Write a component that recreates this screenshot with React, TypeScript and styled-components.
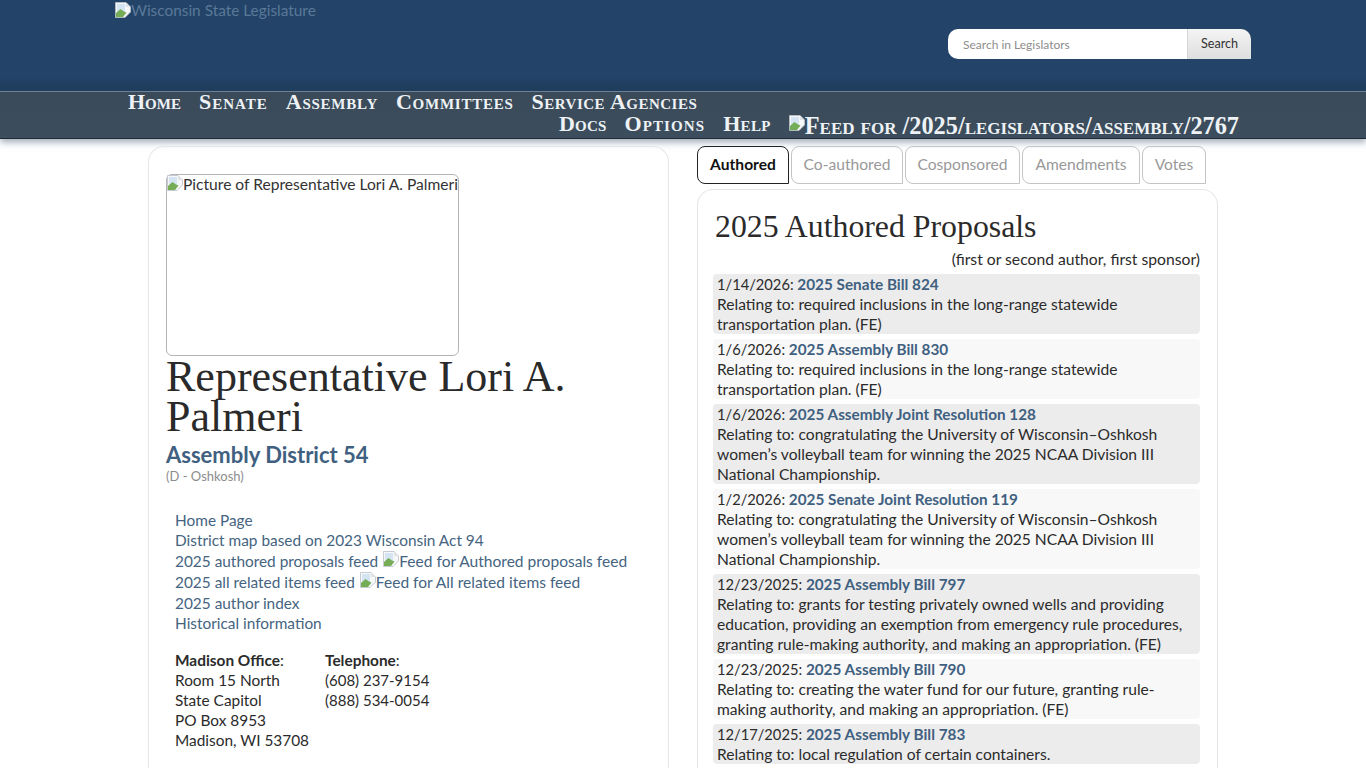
import React from "react";
import styled, { createGlobalStyle } from "styled-components";

const GlobalStyle = createGlobalStyle`
  html, body {
    margin: 0;
    height: 100%;
    overflow: hidden;
    background: #fff;
  }
  body {
    font-family: "Lato", "Liberation Sans", sans-serif;
    font-size: 15.4px;
    line-height: 20px;
    color: #2b2b2b;
  }
`;

const Header = styled.header`
  height: 91px;
  box-sizing: border-box;
  padding: 2px 115px 0;
  display: flex;
  justify-content: space-between;
  background: linear-gradient(#234468 0, #234468 84%, #1e3c5c 100%);
`;

const Logo = styled.div`
  display: flex;
  align-items: flex-start;
  font-size: 15.4px;
  line-height: 16px;
  color: #5a7898;
`;

const SearchForm = styled.form`
  display: flex;
  width: 303px;
  height: 30px;
  margin-top: 27px;
`;

const SearchInput = styled.input`
  flex: 1;
  min-width: 0;
  box-sizing: border-box;
  border: 0;
  border-radius: 10px 0 0 10px;
  padding: 1px 15px 0;
  background: #fff;
  font-family: "Lato", sans-serif;
  font-size: 12px;
  &::placeholder {
    color: #8d8d8d;
    opacity: 1;
  }
`;

const SearchButton = styled.button`
  width: 64px;
  border: 0;
  border-left: 1px solid #d5d5d5;
  border-radius: 0 10px 0 0;
  padding: 0 0 2px;
  background: linear-gradient(#f4f4f4, #dedede);
  color: #333;
  font-family: "Lato", sans-serif;
  font-size: 12.6px;
`;

const Nav = styled.nav`
  height: 48px;
  box-sizing: border-box;
  padding: 0 127px 0 128px;
  border-top: 1px solid #6d8296;
  border-bottom: 1px solid #1d2a35;
  background: linear-gradient(#3a4a59, #3c4d5d);
  box-shadow: 0 3px 7px rgba(60, 80, 105, 0.5);
`;

const NavRow = styled.div<{ $end?: boolean }>`
  display: flex;
  gap: 18px;
  height: 22px;
  justify-content: ${(p) => (p.$end ? "flex-end" : "flex-start")};
  &:first-child {
    margin-top: -1px;
  }
`;

const NavLink = styled.a<{ $large?: boolean; $track?: number }>`
  display: inline-flex;
  align-items: flex-start;
  color: #eef2f5;
  font-family: "Liberation Serif", serif;
  font-variant: small-caps;
  font-weight: 700;
  font-size: ${(p) => (p.$large ? "24.3px" : "22px")};
  letter-spacing: ${(p) => p.$track ?? 0}px;
  line-height: 22px;
  padding-top: ${(p) => (p.$large ? "2px" : "0")};
  white-space: nowrap;
`;

const Page = styled.main`
  display: flex;
  gap: 28px;
  padding: 7px 0 0 148px;
  width: 1070px;
`;

const LeftCard = styled.section`
  width: 521px;
  box-sizing: border-box;
  height: 640px;
  padding: 27px 17px 0;
  border: 1px solid #e6e6e6;
  border-bottom: 0;
  border-radius: 16px 16px 0 0;
  flex: none;
`;

const Portrait = styled.div`
  width: 293px;
  height: 182px;
  box-sizing: border-box;
  border: 1px solid #b4b4b4;
  border-radius: 6px;
  font-size: 15.6px;
  line-height: 18px;
  white-space: nowrap;
  display: flex;
  align-items: flex-start;
  color: #333;
`;

const Name = styled.h1`
  margin: 0;
  padding-top: 1px;
  font-family: "Liberation Serif", serif;
  font-weight: 400;
  font-size: 44px;
  line-height: 40px;
  color: #2a2a2a;
`;

const District = styled.h2`
  margin: 0;
  padding-top: 5px;
  font-size: 22px;
  line-height: 25px;
  font-weight: 700;
  color: #3f6080;
`;

const Party = styled.div`
  font-size: 13px;
  line-height: 18px;
  color: #8c8c8c;
`;

const Links = styled.ul`
  list-style: none;
  margin: 25px 0 0;
  padding: 0 0 0 9px;
`;

const LinkItem = styled.li<{ $pad?: string }>`
  display: flex;
  align-items: flex-start;
  gap: 5px;
  min-height: 20px;
  padding: ${(p) => p.$pad ?? "0"};
  color: #45647f;
  white-space: nowrap;
`;

const AltText = styled.span`
  display: inline-flex;
  align-items: flex-start;
`;

const LinkAlt = styled.span`
  font-size: 15.55px;
`;

const Contacts = styled.div`
  display: flex;
  margin-top: 17px;
  padding-left: 9px;
`;

const ContactColumn = styled.div`
  width: 150px;
`;

const Phone = styled.div`
  font-size: 15px;
`;

const Strong = styled.b`
  font-weight: 700;
`;

const RightColumn = styled.div`
  width: 521px;
  flex: none;
`;

const Tabs = styled.div`
  display: flex;
  gap: 2px;
`;

const Tab = styled.a<{ $active?: boolean; $width: number }>`
  width: ${(p) => p.$width}px;
  height: 38px;
  box-sizing: border-box;
  padding-bottom: 2px;
  display: flex;
  align-items: center;
  justify-content: center;
  border: 1px solid ${(p) => (p.$active ? "#222" : "#c4c4c4")};
  border-radius: 8px 8px 0 8px;
  color: ${(p) => (p.$active ? "#111" : "#999")};
  font-weight: ${(p) => (p.$active ? 700 : 400)};
  font-size: 15.6px;
  white-space: nowrap;
`;

const ProposalCard = styled.section`
  margin-top: 5px;
  padding: 18px 17px 0 15px;
  height: 600px;
  border: 1px solid #e6e6e6;
  border-bottom: 0;
  border-radius: 16px 16px 0 0;
`;

const CardTitle = styled.h2`
  margin: 0;
  padding-left: 2px;
  font-family: "Liberation Serif", serif;
  font-weight: 400;
  font-size: 31.8px;
  line-height: 38px;
  color: #2a2a2a;
`;

const Note = styled.div`
  margin-top: 3px;
  text-align: right;
  font-size: 15.7px;
`;

const Proposal = styled.article<{ $shaded: boolean }>`
  margin-top: 4px;
  padding: 0 3px 0 4px;
  border-top: 1px solid transparent;
  border-radius: 4px;
  background: ${(p) => (p.$shaded ? "#ececec" : "#f8f8f8")};
  background-clip: padding-box;
  font-size: 15.6px;
`;

const DateLabel = styled.span`
  font-size: 14.7px;
`;

const BillLink = styled.a`
  color: #3f6080;
  font-weight: 700;
  font-size: 15.3px;
`;

const BrokenImage = ({ alt }: { alt: string }) => (
  <AltText>
    <svg width="16" height="16" viewBox="0 0 16 16" style={{ flex: "none" }}>
      <path d="M.5 .5h10.5l4.5 4.5v5L10 15.5H.5z" fill="#f6f7f8" stroke="#b9c0c6" strokeWidth=".8" />
      <path d="M11 .5V5h4.5z" fill="#dfe3e6" />
      <path d="M2 2h8v8H2z" fill="#d5e4f2" />
      <path d="M1 15v-4l4.5-4 3.5 2.5 2.5 1L8 15z" fill="#74ad55" />
    </svg>
    {alt}
  </AltText>
);

const navTop = [
  { label: "Home", track: 0 },
  { label: "Senate", track: 1 },
  { label: "Assembly", track: 0.75 },
  { label: "Committees", track: 0.75 },
  { label: "Service Agencies", track: 0.5 },
];

const navBottom = [
  { label: "Docs", track: 0.2 },
  { label: "Options", track: 1.1 },
  { label: "Help", track: 0.3 },
];

const tabs = [
  { label: "Authored", width: 92, active: true },
  { label: "Co-authored", width: 112 },
  { label: "Cosponsored", width: 115 },
  { label: "Amendments", width: 118 },
  { label: "Votes", width: 64 },
];

const proposals = [
  { date: "1/14/2026", bill: "2025 Senate Bill 824", text: ["Relating to: required inclusions in the long-range statewide", "transportation plan. (FE)"] },
  { date: "1/6/2026", bill: "2025 Assembly Bill 830", text: ["Relating to: required inclusions in the long-range statewide", "transportation plan. (FE)"] },
  { date: "1/6/2026", bill: "2025 Assembly Joint Resolution 128", text: ["Relating to: congratulating the University of Wisconsin–Oshkosh", "women’s volleyball team for winning the 2025 NCAA Division III", "National Championship."] },
  { date: "1/2/2026", bill: "2025 Senate Joint Resolution 119", text: ["Relating to: congratulating the University of Wisconsin–Oshkosh", "women’s volleyball team for winning the 2025 NCAA Division III", "National Championship."] },
  { date: "12/23/2025", bill: "2025 Assembly Bill 797", text: ["Relating to: grants for testing privately owned wells and providing", "education, providing an exemption from emergency rule procedures,", "granting rule-making authority, and making an appropriation. (FE)"] },
  { date: "12/23/2025", bill: "2025 Assembly Bill 790", text: ["Relating to: creating the water fund for our future, granting rule-", "making authority, and making an appropriation. (FE)"] },
  { date: "12/17/2025", bill: "2025 Assembly Bill 783", text: ["Relating to: local regulation of certain containers."] },
];

export default function App() {
  return (
    <>
      <GlobalStyle />
      <Header>
        <Logo>
          <BrokenImage alt="Wisconsin State Legislature" />
        </Logo>
        <SearchForm>
          <SearchInput placeholder="Search in Legislators" />
          <SearchButton type="button">Search</SearchButton>
        </SearchForm>
      </Header>
      <Nav>
        <NavRow>
          {navTop.map((item) => (
            <NavLink key={item.label} $track={item.track}>{item.label}</NavLink>
          ))}
        </NavRow>
        <NavRow $end>
          {navBottom.map((item) => (
            <NavLink key={item.label} $track={item.track}>{item.label}</NavLink>
          ))}
          <NavLink $large>
            <BrokenImage alt="Feed for /2025/legislators/assembly/2767" />
          </NavLink>
        </NavRow>
      </Nav>
      <Page>
        <LeftCard>
          <Portrait>
            <BrokenImage alt="Picture of Representative Lori A. Palmeri" />
          </Portrait>
          <Name>Representative Lori A. Palmeri</Name>
          <District>Assembly District 54</District>
          <Party>(D - Oshkosh)</Party>
          <Links>
            <LinkItem>Home Page</LinkItem>
            <LinkItem>District map based on 2023 Wisconsin Act 94</LinkItem>
            <LinkItem $pad="1px 0 0">
              2025 authored proposals feed
              <LinkAlt><BrokenImage alt="Feed for Authored proposals feed" /></LinkAlt>
            </LinkItem>
            <LinkItem $pad="1px 0">
              2025 all related items feed
              <LinkAlt><BrokenImage alt="Feed for All related items feed" /></LinkAlt>
            </LinkItem>
            <LinkItem>2025 author index</LinkItem>
            <LinkItem>Historical information</LinkItem>
          </Links>
          <Contacts>
            <ContactColumn>
              <Strong>Madison Office</Strong>:<br />
              Room 15 North<br />
              State Capitol<br />
              PO Box 8953<br />
              Madison, WI 53708
            </ContactColumn>
            <ContactColumn>
              <Strong>Telephone</Strong>:
              <Phone>(608) 237-9154</Phone>
              <Phone>(888) 534-0054</Phone>
            </ContactColumn>
          </Contacts>
        </LeftCard>
        <RightColumn>
          <Tabs>
            {tabs.map((tab) => (
              <Tab key={tab.label} $active={tab.active} $width={tab.width}>{tab.label}</Tab>
            ))}
          </Tabs>
          <ProposalCard>
            <CardTitle>2025 Authored Proposals</CardTitle>
            <Note>(first or second author, first sponsor)</Note>
            {proposals.map((p, i) => (
              <Proposal key={p.bill} $shaded={i % 2 === 0}>
                <DateLabel>{p.date}: </DateLabel><BillLink>{p.bill}</BillLink>
                {p.text.map((line) => (
                  <div key={line}>{line}</div>
                ))}
              </Proposal>
            ))}
          </ProposalCard>
        </RightColumn>
      </Page>
    </>
  );
}
